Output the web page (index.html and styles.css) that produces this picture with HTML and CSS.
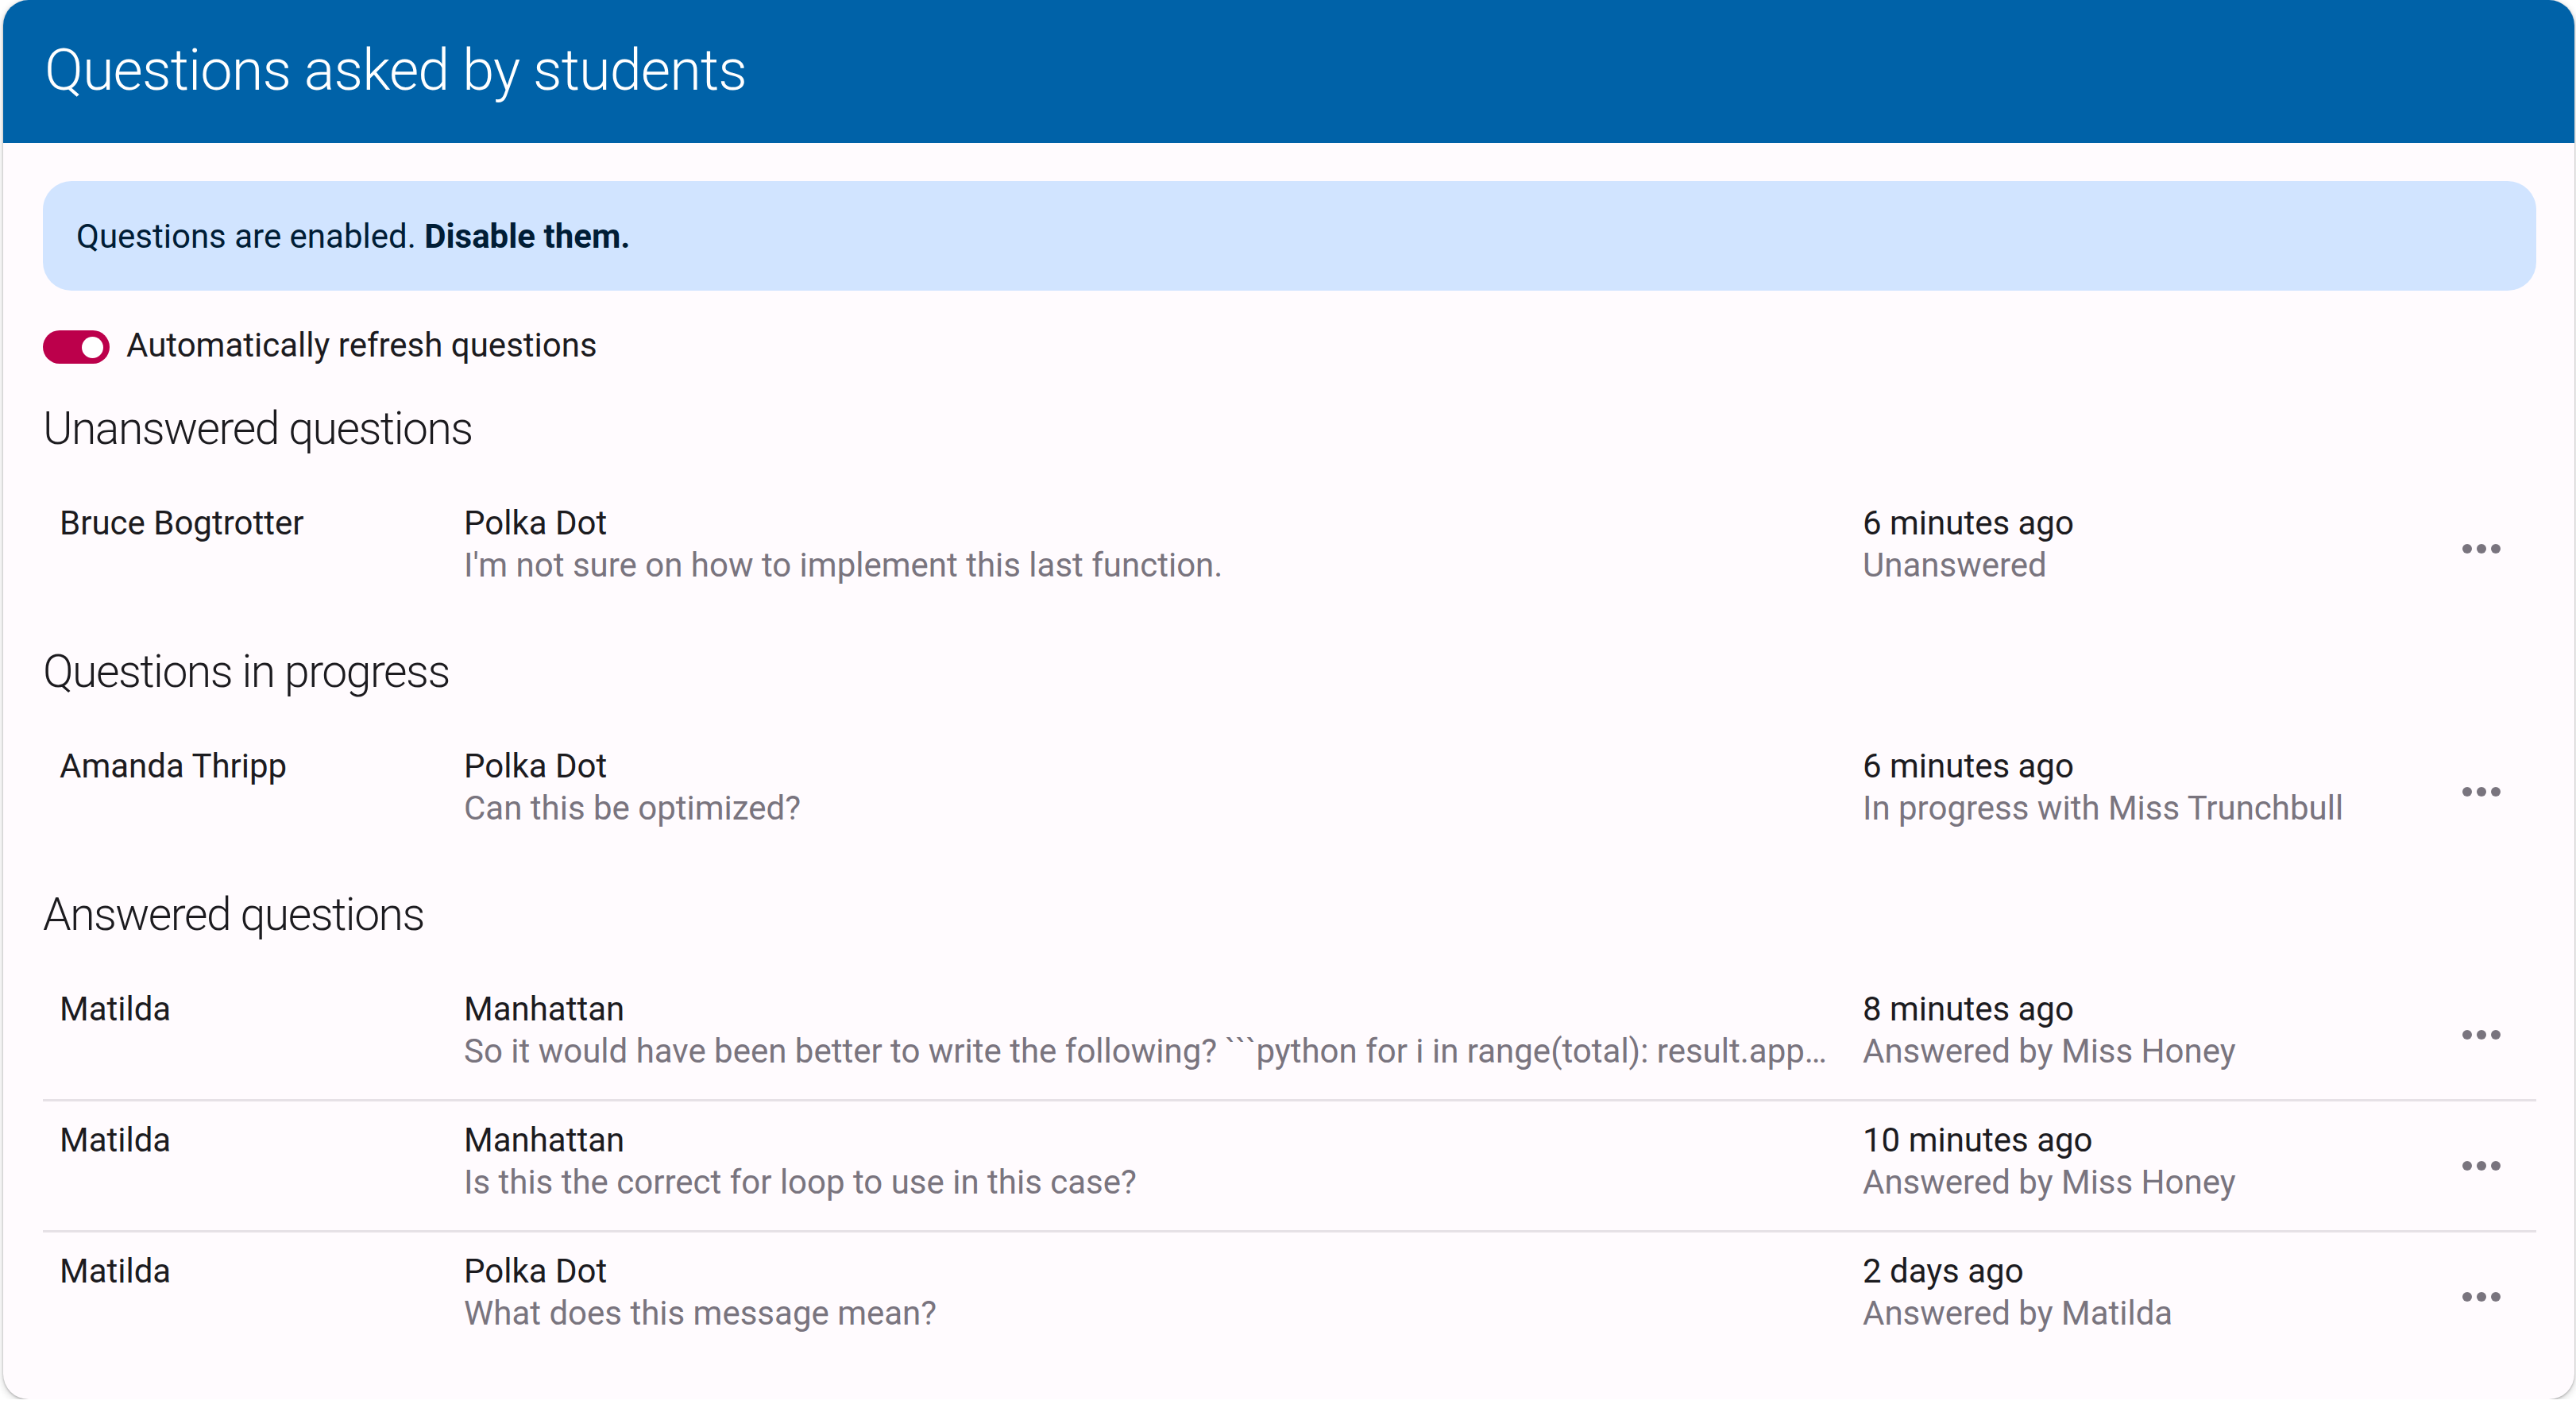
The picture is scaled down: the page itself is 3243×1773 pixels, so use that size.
FILE: index.html
```html
<!DOCTYPE html>
<html lang="en">
<head>
<meta charset="utf-8">
<title>Questions asked by students</title>
<link rel="stylesheet" href="styles.css">
</head>
<body>
<div class="card">
  <header class="card-header">
    <h1 class="card-title">Questions asked by students</h1>
  </header>
  <div class="card-body">
    <div class="banner">Questions are enabled. <strong class="banner-link">Disable them.</strong></div>

    <label class="toggle-row">
      <span class="switch"><span class="knob"></span></span>
      <span class="toggle-label">Automatically refresh questions</span>
    </label>

    <section class="group">
      <h2 class="group-title">Unanswered questions</h2>
      <ul class="list">
        <li class="row">
          <div class="cell"><div class="primary">Bruce Bogtrotter</div></div>
          <div class="cell"><div class="primary">Polka Dot</div><div class="secondary">I'm not sure on how to implement this last function.</div></div>
          <div class="cell"><div class="primary">6 minutes ago</div><div class="secondary">Unanswered</div></div>
          <button class="more" aria-label="More"><svg viewBox="0 0 24 24" width="72" height="72"><circle cx="6" cy="12" r="2"/><circle cx="12" cy="12" r="2"/><circle cx="18" cy="12" r="2"/></svg></button>
        </li>
      </ul>
    </section>

    <section class="group">
      <h2 class="group-title">Questions in progress</h2>
      <ul class="list">
        <li class="row">
          <div class="cell"><div class="primary">Amanda Thripp</div></div>
          <div class="cell"><div class="primary">Polka Dot</div><div class="secondary">Can this be optimized?</div></div>
          <div class="cell"><div class="primary">6 minutes ago</div><div class="secondary">In progress with Miss Trunchbull</div></div>
          <button class="more" aria-label="More"><svg viewBox="0 0 24 24" width="72" height="72"><circle cx="6" cy="12" r="2"/><circle cx="12" cy="12" r="2"/><circle cx="18" cy="12" r="2"/></svg></button>
        </li>
      </ul>
    </section>

    <section class="group">
      <h2 class="group-title">Answered questions</h2>
      <ul class="list">
        <li class="row">
          <div class="cell"><div class="primary">Matilda</div></div>
          <div class="cell"><div class="primary">Manhattan</div><div class="secondary">So it would have been better to write the following? ```python for i in range(total): result.append(values[i] * 2) ```</div></div>
          <div class="cell"><div class="primary">8 minutes ago</div><div class="secondary">Answered by Miss Honey</div></div>
          <button class="more" aria-label="More"><svg viewBox="0 0 24 24" width="72" height="72"><circle cx="6" cy="12" r="2"/><circle cx="12" cy="12" r="2"/><circle cx="18" cy="12" r="2"/></svg></button>
        </li>
        <li class="row">
          <div class="cell"><div class="primary">Matilda</div></div>
          <div class="cell"><div class="primary">Manhattan</div><div class="secondary">Is this the correct for loop to use in this case?</div></div>
          <div class="cell"><div class="primary">10 minutes ago</div><div class="secondary">Answered by Miss Honey</div></div>
          <button class="more" aria-label="More"><svg viewBox="0 0 24 24" width="72" height="72"><circle cx="6" cy="12" r="2"/><circle cx="12" cy="12" r="2"/><circle cx="18" cy="12" r="2"/></svg></button>
        </li>
        <li class="row">
          <div class="cell"><div class="primary">Matilda</div></div>
          <div class="cell"><div class="primary">Polka Dot</div><div class="secondary">What does this message mean?</div></div>
          <div class="cell"><div class="primary">2 days ago</div><div class="secondary">Answered by Matilda</div></div>
          <button class="more" aria-label="More"><svg viewBox="0 0 24 24" width="72" height="72"><circle cx="6" cy="12" r="2"/><circle cx="12" cy="12" r="2"/><circle cx="18" cy="12" r="2"/></svg></button>
        </li>
      </ul>
    </section>
  </div>
</div>
</body>
</html>
```

FILE: styles.css
```css
* { box-sizing: border-box; }

html, body {
  margin: 0;
  padding: 0;
  background: #ffffff;
}

body {
  font-family: Roboto, "Noto Sans", "Liberation Sans", sans-serif;
  color: #1c1b1f;
  padding: 0 2px 0 4px;
}

.card {
  background: #fffbfe;
  border-radius: 32px;
  overflow: hidden;
  box-shadow: 0 1px 3px rgba(0, 0, 0, 0.28), 0 3px 8px 2px rgba(0, 0, 0, 0.12);
}

.card-header {
  background: #0062a8;
  height: 180px;
  padding: 0 0 2px 52px;
}

.card-title {
  margin: 0;
  font-size: 72px;
  font-weight: 300;
  letter-spacing: -0.85px;
  line-height: 178px;
  color: #ffffff;
}

.card-body {
  padding: 48px 48px 48px 50px;
}

.banner {
  background: #d1e4ff;
  color: #001d36;
  border-radius: 36px;
  padding: 42.5px 42px;
  font-size: 42px;
  line-height: 53px;
}

.banner-link {
  font-weight: 700;
}

.toggle-row {
  display: flex;
  align-items: center;
  gap: 21px;
  height: 42px;
  margin-top: 50px;
}

.switch {
  width: 84px;
  height: 42px;
  border-radius: 21px;
  background: #bc004b;
  display: flex;
  align-items: center;
  justify-content: flex-end;
  padding-right: 8px;
  flex: none;
}

.knob {
  width: 27px;
  height: 27px;
  border-radius: 50%;
  background: #ffffff;
}

.toggle-label {
  font-size: 42px;
  line-height: 42px;
  margin-top: -4px;
}

.group-title {
  margin: 35px 0 32px;
  font-size: 57px;
  font-weight: 300;
  letter-spacing: -1.5px;
  line-height: 77px;
  color: #1c1b1f;
}

.toggle-row + .group .group-title {
  margin-top: 43px;
}

.list {
  list-style: none;
  margin: 0;
  padding: 0;
}

.row {
  display: grid;
  grid-template-columns: 473px 1725px 1fr 72px;
  column-gap: 36px;
  align-items: start;
  height: 162px;
  padding: 22px 33px 0 21px;
  font-size: 42px;
  line-height: 53px;
}

.row + .row {
  border-top: 3px solid #e6e1e6;
  height: 165px;
}

.cell {
  min-width: 0;
}

.primary {
  color: #1c1b1f;
  white-space: nowrap;
}

.secondary {
  color: #79747e;
  white-space: nowrap;
  overflow: hidden;
  text-overflow: ellipsis;
}

.more {
  align-self: center;
  width: 72px;
  height: 72px;
  margin-top: -22px;
  padding: 0;
  border: 0;
  background: transparent;
  fill: #79747e;
  display: flex;
}
```
